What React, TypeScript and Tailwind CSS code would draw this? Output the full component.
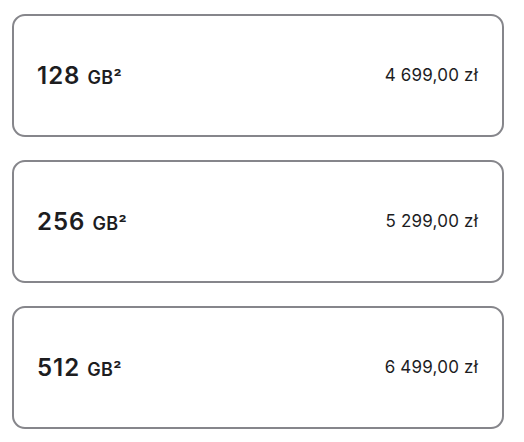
const options = [
  { size: "128", price: "4 699,00 zł" },
  { size: "256", price: "5 299,00 zł" },
  { size: "512", price: "6 499,00 zł" },
];

export default function App() {
  return (
    <div className="w-[524px] h-[442px] bg-white pt-[14px] pl-3 font-['Inter',sans-serif] text-[#1d1d1f]">
      <div className="flex flex-col gap-[23px] w-[492px]">
        {options.map((o) => (
          <div
            key={o.size}
            className="h-[123px] rounded-[13px] border-2 border-[#86868b] flex items-center justify-between pl-[23px] pr-[24px]"
          >
            <div className="flex items-baseline">
              <span className="text-[24px] font-semibold tracking-[1px]">{o.size}</span>
              <span className="ml-[7px] text-[18px] font-semibold tracking-[0.4px]">GB²</span>
            </div>
            <span className="text-[17px] tracking-[0.2px]">{o.price}</span>
          </div>
        ))}
      </div>
    </div>
  );
}
